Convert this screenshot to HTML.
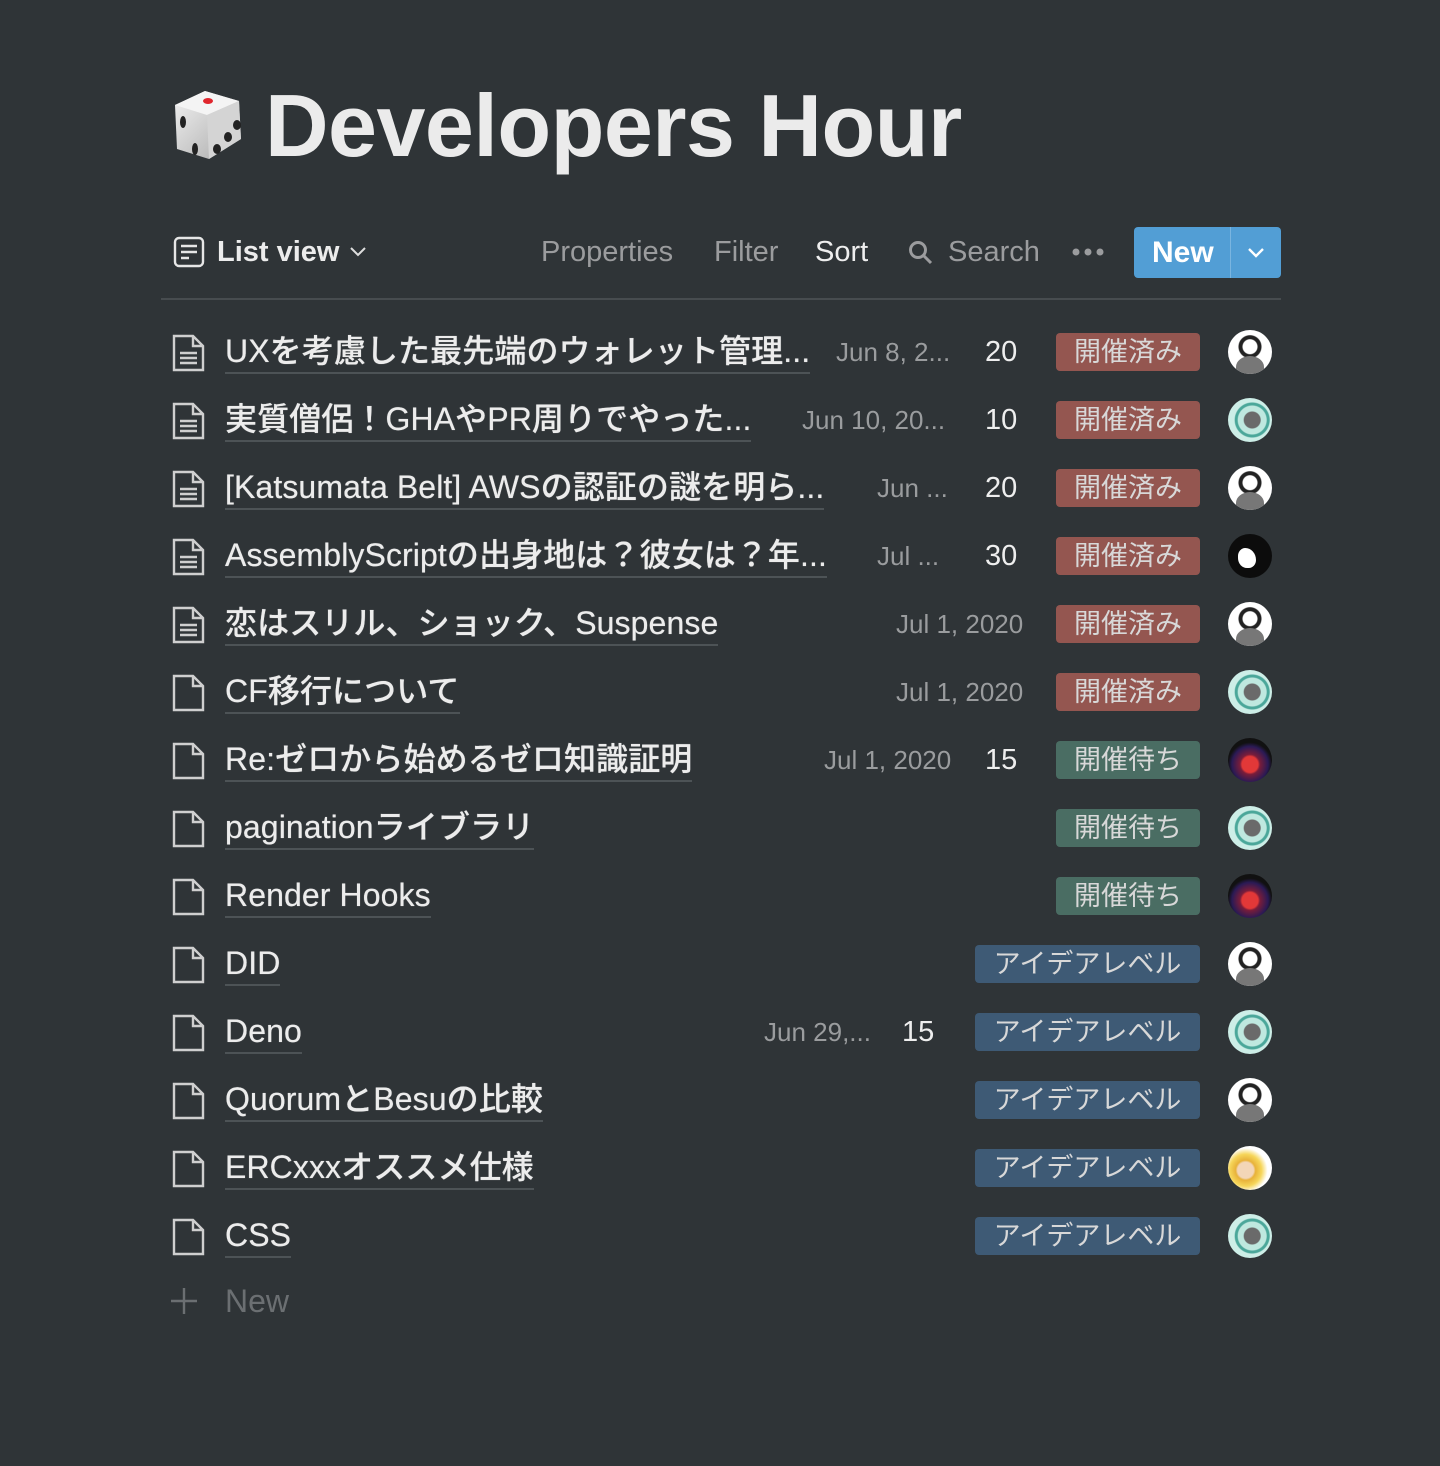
<!DOCTYPE html>
<html><head><meta charset="utf-8">
<style>
*{margin:0;padding:0;box-sizing:border-box}
body{width:1440px;height:1466px;background:#2f3437;font-family:"Liberation Sans","Noto Sans CJK JP",sans-serif;color:#e6e6e6;position:relative;overflow:hidden}
.abs{position:absolute;white-space:nowrap}
h1{position:absolute;left:265px;top:76px;font-size:88px;font-weight:700;color:#ebebeb;letter-spacing:-0.5px;line-height:100px}
.tb{font-size:29px;line-height:40px;top:232px}
.row{position:absolute;left:0;width:1440px;height:68px}
.ic{position:absolute;left:172px;top:16px}
.t{position:absolute;left:225px;top:13px;font-size:32px;line-height:41px;font-weight:500;color:#ececec;border-bottom:2px solid #4d5356;white-space:nowrap;letter-spacing:0.1px;text-shadow:0 0 0.6px #ececec}
.d{position:absolute;top:17px;font-size:26px;line-height:34px;color:#9a9c9e;white-space:nowrap}
.n{position:absolute;top:16px;font-size:29px;line-height:36px;color:#eee}
.tag{position:absolute;top:15px;height:38px;right:240px;border-radius:4px;font-size:27px;line-height:38px;text-align:center;color:#d8d8d8}
.r{background:#945650;width:144px}
.g{background:#4a6d63;width:144px}
.b{background:#3e5a75;width:225px}
.av{position:absolute;left:1228px;top:12px;width:44px;height:44px;border-radius:50%;overflow:hidden}
.A{background:radial-gradient(circle at 50% 38%,#fff 0 7px,#222 8px 11px,#fff 12px),#fff;}
.A::after{content:"";position:absolute;left:8px;top:26px;width:28px;height:22px;border-radius:50% 50% 0 0;background:#777}
.B{background:radial-gradient(circle at 55% 50%,#6a6a6a 0 8px,#bfe8df 9px 14px,#4ba79a 15px 17px,#cdeee7 18px)}
.C{background:#0c0c0c}
.C::after{content:"";position:absolute;left:10px;top:14px;width:18px;height:20px;background:#fff;border-radius:40% 60% 40% 50%}
.D{background:radial-gradient(circle at 50% 60%,#e23838 0 8px,#7a1d3a 10px,#2a1a55 18px,#111 22px)}
.E{background:radial-gradient(circle at 40% 55%,#f3d6b8 0 8px,#e8b23a 10px,#f6d65a 16px,#fff 22px)}
</style></head><body>

<svg class="abs" style="left:167px;top:87px" width="78" height="76" viewBox="0 0 78 76">
<defs><linearGradient id="dg" x1="0" y1="0" x2="1" y2="1"><stop offset="0" stop-color="#f2f2f2"/><stop offset="1" stop-color="#a9a9a9"/></linearGradient></defs>
<path d="M8 18 L38 4 L72 14 L74 52 L42 72 L10 62 Z" fill="url(#dg)"/>
<path d="M8 18 L38 4 L72 14 L40 28 Z" fill="#f4f4f4"/>
<path d="M40 28 L72 14 L74 52 L42 72 Z" fill="#d4d4d4"/>
<ellipse cx="41" cy="14" rx="5" ry="3" fill="#e0262d"/>
<ellipse cx="16" cy="35" rx="3" ry="6" fill="#222"/>
<ellipse cx="28" cy="62" rx="3" ry="6" fill="#222"/>
<ellipse cx="70" cy="38" rx="4" ry="5" fill="#222"/>
<ellipse cx="61" cy="50" rx="4" ry="5" fill="#222"/>
<ellipse cx="50" cy="62" rx="4" ry="5" fill="#222"/>
</svg>
<h1>Developers Hour</h1>

<svg class="abs" style="left:173px;top:236px" width="32" height="32" viewBox="0 0 32 32" fill="none" stroke="#e6e6e6" stroke-width="2.4"><rect x="2" y="2" width="28" height="28" rx="4"/><path d="M8 10h16M8 16h16M8 22h8"/></svg>
<div class="abs tb" style="left:217px;font-weight:600;color:#ececec">List view</div>
<svg class="abs" style="left:349px;top:245px" width="18" height="12" viewBox="0 0 18 12" fill="none" stroke="#ddd" stroke-width="2"><path d="M2 3l7 7 7-7"/></svg>
<div class="abs tb" style="left:541px;color:#9b9c9e">Properties</div>
<div class="abs tb" style="left:714px;color:#9b9c9e">Filter</div>
<div class="abs tb" style="left:815px;color:#eee">Sort</div>
<svg class="abs" style="left:907px;top:239px" width="28" height="28" viewBox="0 0 28 28" fill="none" stroke="#9b9c9e" stroke-width="3"><circle cx="11" cy="11" r="7.5"/><path d="M17 17l7 7"/></svg>
<div class="abs tb" style="left:948px;color:#9b9c9e">Search</div>
<svg class="abs" style="left:1071px;top:247px" width="34" height="10"><circle cx="5" cy="5" r="3.5" fill="#9b9c9e"/><circle cx="17" cy="5" r="3.5" fill="#9b9c9e"/><circle cx="29" cy="5" r="3.5" fill="#9b9c9e"/></svg>
<div class="abs" style="left:1134px;top:227px;width:147px;height:51px;background:#529ed5;border-radius:4px"></div>
<div class="abs" style="left:1230px;top:227px;width:1px;height:51px;background:#7ab5e0"></div>
<div class="abs" style="left:1152px;top:233px;font-size:30px;line-height:40px;font-weight:700;color:#fff">New</div>
<svg class="abs" style="left:1246px;top:246px" width="20" height="13" viewBox="0 0 20 13" fill="none" stroke="#fff" stroke-width="2.4"><path d="M3 3l7 7 7-7"/></svg>
<div class="abs" style="left:161px;top:298px;width:1120px;height:2px;background:#474c4f"></div>

<div class="row" style="top:318px"><svg class="ic" width="34" height="38" viewBox="0 0 34 38" fill="none" stroke="#cfcfcf" stroke-width="2.4"><path d="M2 2h19l10 10v24H2z M21 2v10h10"/><path d="M8 19h17M8 24h17M8 29h17"/></svg><div class="t">UXを考慮した最先端のウォレット管理...</div><div class="d" style="left:836px">Jun 8, 2...</div><div class="n" style="left:985px">20</div><div class="tag r">開催済み</div><div class="av A"></div></div>
<div class="row" style="top:386px"><svg class="ic" width="34" height="38" viewBox="0 0 34 38" fill="none" stroke="#cfcfcf" stroke-width="2.4"><path d="M2 2h19l10 10v24H2z M21 2v10h10"/><path d="M8 19h17M8 24h17M8 29h17"/></svg><div class="t">実質僧侶！GHAやPR周りでやった...</div><div class="d" style="left:802px">Jun 10, 20...</div><div class="n" style="left:985px">10</div><div class="tag r">開催済み</div><div class="av B"></div></div>
<div class="row" style="top:454px"><svg class="ic" width="34" height="38" viewBox="0 0 34 38" fill="none" stroke="#cfcfcf" stroke-width="2.4"><path d="M2 2h19l10 10v24H2z M21 2v10h10"/><path d="M8 19h17M8 24h17M8 29h17"/></svg><div class="t">[Katsumata Belt] AWSの認証の謎を明ら...</div><div class="d" style="left:877px">Jun ...</div><div class="n" style="left:985px">20</div><div class="tag r">開催済み</div><div class="av A"></div></div>
<div class="row" style="top:522px"><svg class="ic" width="34" height="38" viewBox="0 0 34 38" fill="none" stroke="#cfcfcf" stroke-width="2.4"><path d="M2 2h19l10 10v24H2z M21 2v10h10"/><path d="M8 19h17M8 24h17M8 29h17"/></svg><div class="t">AssemblyScriptの出身地は？彼女は？年...</div><div class="d" style="left:877px">Jul ...</div><div class="n" style="left:985px">30</div><div class="tag r">開催済み</div><div class="av C"></div></div>
<div class="row" style="top:590px"><svg class="ic" width="34" height="38" viewBox="0 0 34 38" fill="none" stroke="#cfcfcf" stroke-width="2.4"><path d="M2 2h19l10 10v24H2z M21 2v10h10"/><path d="M8 19h17M8 24h17M8 29h17"/></svg><div class="t">恋はスリル、ショック、Suspense</div><div class="d" style="left:896px">Jul 1, 2020</div><div class="tag r">開催済み</div><div class="av A"></div></div>
<div class="row" style="top:658px"><svg class="ic" width="34" height="38" viewBox="0 0 34 38" fill="none" stroke="#cfcfcf" stroke-width="2.4"><path d="M2 2h19l10 10v24H2z M21 2v10h10"/></svg><div class="t">CF移行について</div><div class="d" style="left:896px">Jul 1, 2020</div><div class="tag r">開催済み</div><div class="av B"></div></div>
<div class="row" style="top:726px"><svg class="ic" width="34" height="38" viewBox="0 0 34 38" fill="none" stroke="#cfcfcf" stroke-width="2.4"><path d="M2 2h19l10 10v24H2z M21 2v10h10"/></svg><div class="t">Re:ゼロから始めるゼロ知識証明</div><div class="d" style="left:824px">Jul 1, 2020</div><div class="n" style="left:985px">15</div><div class="tag g">開催待ち</div><div class="av D"></div></div>
<div class="row" style="top:794px"><svg class="ic" width="34" height="38" viewBox="0 0 34 38" fill="none" stroke="#cfcfcf" stroke-width="2.4"><path d="M2 2h19l10 10v24H2z M21 2v10h10"/></svg><div class="t">paginationライブラリ</div><div class="tag g">開催待ち</div><div class="av B"></div></div>
<div class="row" style="top:862px"><svg class="ic" width="34" height="38" viewBox="0 0 34 38" fill="none" stroke="#cfcfcf" stroke-width="2.4"><path d="M2 2h19l10 10v24H2z M21 2v10h10"/></svg><div class="t">Render Hooks</div><div class="tag g">開催待ち</div><div class="av D"></div></div>
<div class="row" style="top:930px"><svg class="ic" width="34" height="38" viewBox="0 0 34 38" fill="none" stroke="#cfcfcf" stroke-width="2.4"><path d="M2 2h19l10 10v24H2z M21 2v10h10"/></svg><div class="t">DID</div><div class="tag b">アイデアレベル</div><div class="av A"></div></div>
<div class="row" style="top:998px"><svg class="ic" width="34" height="38" viewBox="0 0 34 38" fill="none" stroke="#cfcfcf" stroke-width="2.4"><path d="M2 2h19l10 10v24H2z M21 2v10h10"/></svg><div class="t">Deno</div><div class="d" style="left:764px">Jun 29,...</div><div class="n" style="left:902px">15</div><div class="tag b">アイデアレベル</div><div class="av B"></div></div>
<div class="row" style="top:1066px"><svg class="ic" width="34" height="38" viewBox="0 0 34 38" fill="none" stroke="#cfcfcf" stroke-width="2.4"><path d="M2 2h19l10 10v24H2z M21 2v10h10"/></svg><div class="t">QuorumとBesuの比較</div><div class="tag b">アイデアレベル</div><div class="av A"></div></div>
<div class="row" style="top:1134px"><svg class="ic" width="34" height="38" viewBox="0 0 34 38" fill="none" stroke="#cfcfcf" stroke-width="2.4"><path d="M2 2h19l10 10v24H2z M21 2v10h10"/></svg><div class="t">ERCxxxオススメ仕様</div><div class="tag b">アイデアレベル</div><div class="av E"></div></div>
<div class="row" style="top:1202px"><svg class="ic" width="34" height="38" viewBox="0 0 34 38" fill="none" stroke="#cfcfcf" stroke-width="2.4"><path d="M2 2h19l10 10v24H2z M21 2v10h10"/></svg><div class="t">CSS</div><div class="tag b">アイデアレベル</div><div class="av B"></div></div>

<svg class="abs" style="left:170px;top:1287px" width="28" height="28" viewBox="0 0 28 28" stroke="#6b6f72" stroke-width="2.4"><path d="M14 1v26M1 14h26"/></svg>
<div class="abs" style="left:225px;top:1281px;font-size:32px;line-height:40px;color:#6b6f72">New</div>
</body></html>
